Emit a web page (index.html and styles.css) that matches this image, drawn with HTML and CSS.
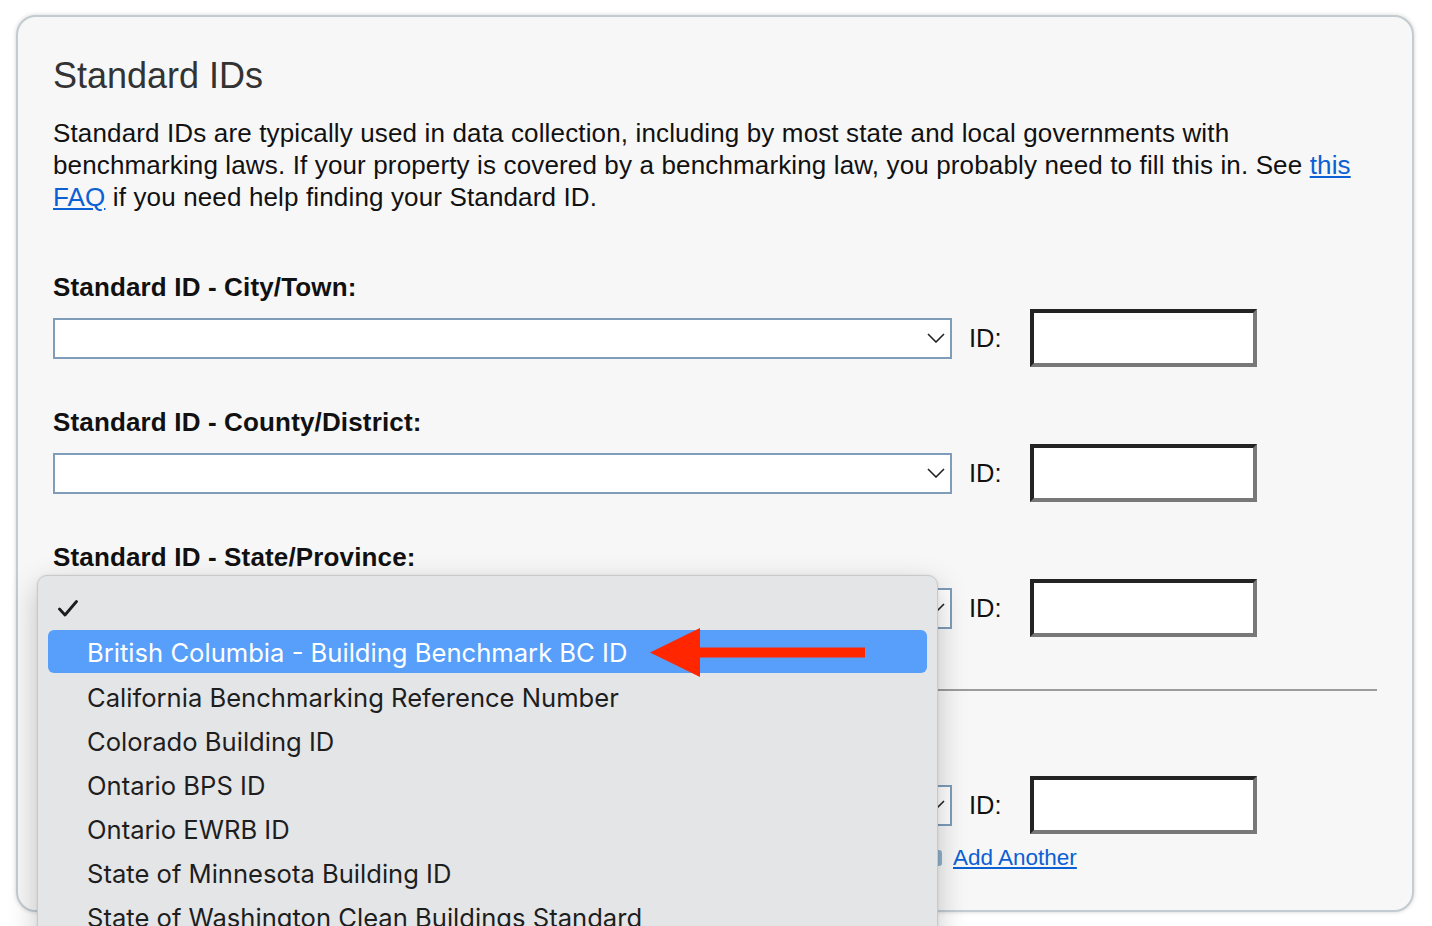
FILE: index.html
```html
<!DOCTYPE html>
<html lang="en">
<head>
<meta charset="utf-8">
<title>Standard IDs</title>
<link rel="stylesheet" href="styles.css">
</head>
<body>
<div class="card">
  <h1 class="title">Standard IDs</h1>
  <p class="intro">Standard IDs are typically used in data collection, including by most state and local governments with<br>benchmarking laws. If your property is covered by a benchmarking law, you probably need to fill this in. See <a href="#">this</a><br><a href="#">FAQ</a> if you need help finding your Standard ID.</p>

  <div class="group">
    <div class="label">Standard ID - City/Town:</div>
    <div class="row">
      <div class="select"><svg class="chev" viewBox="0 0 18 10" width="18" height="10"><polyline points="1,1 9,9 17,1" fill="none" stroke="#222" stroke-width="1.6"/></svg></div>
      <span class="idlbl">ID:</span>
      <div class="input"></div>
    </div>
  </div>

  <div class="group">
    <div class="label">Standard ID - County/District:</div>
    <div class="row">
      <div class="select"><svg class="chev" viewBox="0 0 18 10" width="18" height="10"><polyline points="1,1 9,9 17,1" fill="none" stroke="#222" stroke-width="1.6"/></svg></div>
      <span class="idlbl">ID:</span>
      <div class="input"></div>
    </div>
  </div>

  <div class="group">
    <div class="label">Standard ID - State/Province:</div>
    <div class="row">
      <div class="select"><svg class="chev" viewBox="0 0 18 10" width="18" height="10"><polyline points="1,1 9,9 17,1" fill="none" stroke="#222" stroke-width="1.6"/></svg></div>
      <span class="idlbl">ID:</span>
      <div class="input"></div>
    </div>
  </div>

  <div class="rule"></div>

  <div class="group last">
    <div class="label">&nbsp;</div>
    <div class="row">
      <div class="select"><svg class="chev" viewBox="0 0 18 10" width="18" height="10"><polyline points="1,1 9,9 17,1" fill="none" stroke="#222" stroke-width="1.6"/></svg></div>
      <span class="idlbl">ID:</span>
      <div class="input"></div>
    </div>
  </div>

  <div class="addrow">
    <span class="addicon"></span>
    <a href="#" class="addlink">Add Another</a>
  </div>
</div>

<div class="menu">
  <div class="item checked"><svg class="check" viewBox="0 0 20 17" width="20" height="17"><polyline points="1.5,9 7,15 18.5,1.5" fill="none" stroke="#1d1d1d" stroke-width="2.8" stroke-linecap="round" stroke-linejoin="round"/></svg></div>
  <div class="item active">British Columbia - Building Benchmark BC ID</div>
  <div class="item">California Benchmarking Reference Number</div>
  <div class="item">Colorado Building ID</div>
  <div class="item">Ontario BPS ID</div>
  <div class="item">Ontario EWRB ID</div>
  <div class="item">State of Minnesota Building ID</div>
  <div class="item">State of Washington Clean Buildings Standard</div>
</div>

<svg class="arrow" viewBox="0 0 216 51" width="216" height="51">
  <polygon points="0,25.5 50,1 50,50" fill="#ff2600"/>
  <rect x="49" y="20.5" width="166" height="10" fill="#ff2600"/>
</svg>
</body>
</html>
```

FILE: styles.css
```css
html, body {
  margin: 0;
  padding: 0;
  overflow: hidden;
  background: #ffffff;
  font-family: "Liberation Sans", Arial, Helvetica, sans-serif;
}

body {
  padding: 15px 18px 0 16px;
  position: relative;
  height: 926px;
  box-sizing: border-box;
}

.card {
  box-sizing: border-box;
  width: 1398px;
  border: 2px solid #c3ccd1;
  border-radius: 20px;
  background: #f7f7f7;
  box-shadow: 0 0 4px rgba(0, 0, 0, 0.18);
  padding: 39px 35px 39px 35px;
}

.title {
  margin: 0 0 21px 0;
  font-size: 36px;
  line-height: 40px;
  font-weight: normal;
  color: #333333;
}

.intro {
  margin: 0 0 58px 0;
  font-size: 26px;
  letter-spacing: 0.14px;
  line-height: 32px;
  color: #111111;
}

.intro a,
.addlink {
  color: #0b60d4;
  text-decoration: underline;
}

.group {
  margin-bottom: 39px;
}

.group.last {
  margin-bottom: 0;
}

.label {
  font-size: 26px;
  letter-spacing: 0.15px;
  line-height: 32px;
  font-weight: bold;
  color: #111111;
  margin-bottom: 6px;
}

.row {
  display: flex;
  align-items: center;
  height: 58px;
}

.select {
  box-sizing: border-box;
  width: 899px;
  height: 41px;
  border: 2px solid #7f9db9;
  background: #ffffff;
  display: flex;
  align-items: center;
  justify-content: flex-end;
  padding-right: 5px;
}

.chev {
  display: block;
}

.idlbl {
  font-size: 25.5px;
  color: #111111;
  margin-left: 17px;
}

.input {
  box-sizing: border-box;
  width: 227px;
  height: 58px;
  margin-left: 28px;
  background: #ffffff;
  border-style: solid;
  border-width: 4px;
  border-color: #232323 #787878 #787878 #232323;
}

.rule {
  height: 2px;
  background: #9c9c9c;
  margin: 52px 0 47px 0;
}

.addrow {
  display: flex;
  align-items: center;
  height: 26px;
  margin-top: 11px;
  padding-left: 873px;
}

.addicon {
  width: 16px;
  height: 16px;
  border-radius: 3px;
  background: #8fb0ca;
  margin-right: 11px;
}

.addlink {
  font-size: 22.5px;
  line-height: 26px;
}

.menu {
  position: absolute;
  left: 37px;
  top: 575px;
  width: 901px;
  height: 420px;
  box-sizing: border-box;
  background: #e4e5e7;
  border: 1px solid #c8c9cb;
  border-radius: 10px;
  box-shadow: 0 10px 30px rgba(0, 0, 0, 0.22), 0 0 3px rgba(0, 0, 0, 0.08);
  padding: 10px 10px 0 10px;
  overflow: hidden;
  font-family: Inter, "Noto Sans", sans-serif;
}

.item {
  height: 44px;
  line-height: 47px;
  padding-left: 39px;
  font-size: 25.6px;
  color: #1e1e1e;
  border-radius: 6px;
  white-space: nowrap;
}

.item.checked {
  position: relative;
}

.check {
  position: absolute;
  left: 10px;
  top: 14px;
}

.item.active {
  background: #579ffb;
  color: #ffffff;
  height: 43px;
  line-height: 46px;
  margin-bottom: 1px;
}

.arrow {
  position: absolute;
  left: 650px;
  top: 627px;
  display: block;
}
```
